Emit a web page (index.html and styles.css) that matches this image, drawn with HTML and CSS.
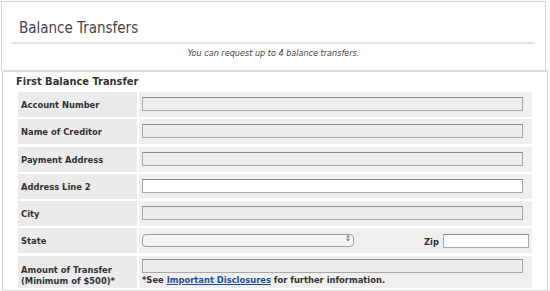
FILE: index.html
```html
<!DOCTYPE html>
<html lang="en">
<head>
	<meta charset="UTF-8">
	<title>Balance Transfers</title>
	<link rel="stylesheet" href="styles.css">
</head>
<body>
	<!-- header -->
	<div class="panel head">
		<h1>Balance Transfers</h1>
		<p class="note">You can request up to 4 balance transfers.</p>
	</div>
	<!-- form -->
	<div class="panel form">
		<h2>First Balance Transfer</h2>
		<div class="rows">
			<div class="lbl">Account Number</div>
			<div class="fld"><input type="text" class="txt grey"></div>

			<div class="lbl">Name of Creditor</div>
			<div class="fld"><input type="text" class="txt grey"></div>

			<div class="lbl">Payment Address</div>
			<div class="fld"><input type="text" class="txt grey"></div>

			<div class="lbl">Address Line 2</div>
			<div class="fld"><input type="text" class="txt"></div>

			<div class="lbl">City</div>
			<div class="fld"><input type="text" class="txt grey"></div>

			<div class="lbl">State</div>
			<div class="fld state">
				<div class="sel"><span class="arr">&#8661;</span></div>
				<span class="zip">Zip</span>
				<input type="text" class="txt zipbox">
			</div>

			<div class="lbl tall">Amount of Transfer<br>(Minimum of $500)*</div>
			<div class="fld tall">
				<input type="text" class="txt grey">
				<p class="see">*See <a href="">Important Disclosures</a> for further information.</p>
			</div>
		</div>
	</div>
</body>
</html>
```

FILE: styles.css
```css
* {
	margin: 0;
	padding: 0;
	box-sizing: border-box;
}

body {
	background-color: #fff;
	font-family: "DejaVu Sans Condensed", "DejaVu Sans", sans-serif;
	color: #333;
}

.panel {
	border: 1px solid #d2d2d2;
}

.head {
	width: 545px;
	height: 69px;
	margin: 1px 0 0 1px;
	padding: 0 10px;
	border-bottom: none;
}

.head h1 {
	font-weight: normal;
	font-size: 15px;
	color: #444;
	height: 42px;
	padding: 17px 0 0 7px;
	border-bottom: 2px solid #e3e3e3;
}

.note {
	font-size: 9px;
	font-style: italic;
	text-align: center;
	color: #444;
	padding-top: 4px;
}

.form {
	width: 546px;
	height: 222px;
	margin-left: 2px;
	border-top: 2px solid #dcdcdc;
	border-bottom: 2px solid #dcdcdc;
	padding: 3px 14px 0 15px;
}

.form h2 {
	font-size: 11px;
	font-weight: bold;
	color: #333;
	margin-left: -2px;
	height: 17px;
}

.rows {
	display: grid;
	grid-template-columns: 119px 393px;
	column-gap: 2px;
	row-gap: 2.3px;
}

.lbl {
	background-color: #ebebeb;
	font-size: 9.3px;
	font-weight: bold;
	color: #333;
	height: 25px;
	line-height: 25px;
	padding-left: 3px;
}

.fld {
	background-color: #efefef;
	height: 25px;
	padding: 5px 0 0 3px;
}

.txt {
	display: block;
	width: 381px;
	height: 14px;
	border: 1px solid #a9a9a9;
	border-top-color: #8a8a8a;
	background-color: #fff;
}

.txt.grey {
	background-color: #ededed;
}

.state {
	display: flex;
	align-items: flex-start;
	padding-top: 6px;
}

.sel {
	width: 212px;
	height: 13px;
	border: 1px solid #a0a0a0;
	border-radius: 4px;
	background-color: #f4f4f4;
	position: relative;
}

.arr {
	position: absolute;
	right: 2px;
	top: -1px;
	font-size: 8px;
	color: #555;
}

.zip {
	font-size: 9.3px;
	font-weight: bold;
	margin: 2px 4px 0 70px;
}

.zipbox {
	width: 86px;
	height: 14px;
}

.tall {
	height: 32px;
}

.lbl.tall {
	line-height: 11px;
	padding-top: 8px;
}

.fld.tall {
	padding-top: 3px;
}

.see {
	font-size: 9.3px;
	font-weight: bold;
	color: #333;
	margin-top: 1px;
}

.see a {
	color: #1f4e9a;
}
```
